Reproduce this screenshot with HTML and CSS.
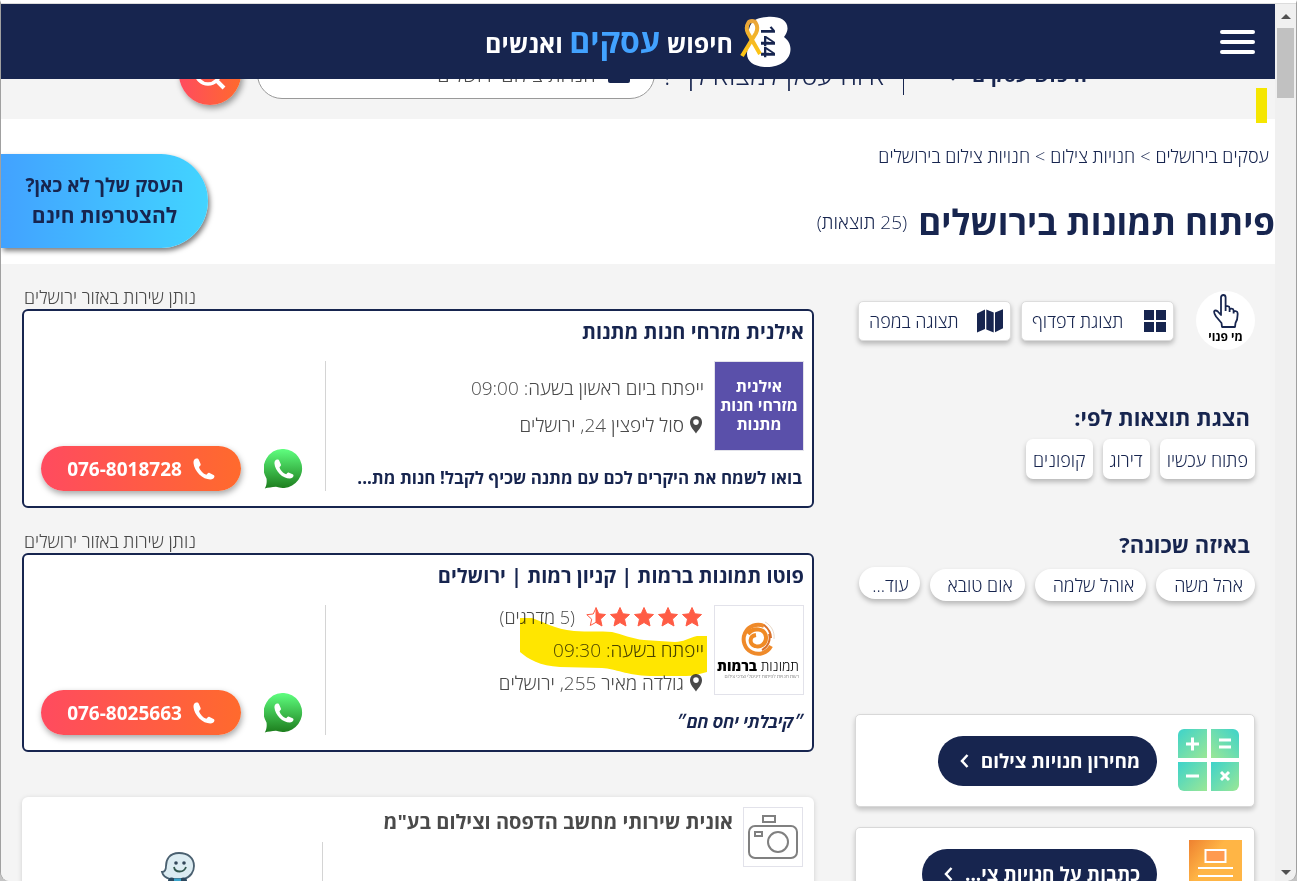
FILE: index.html
```html
<!DOCTYPE html>
<html lang="he">
<head>
<meta charset="UTF-8">
<title>פיתוח תמונות בירושלים</title>
<link rel="stylesheet" href="styles.css">
</head>
<body>
<svg class="defs" width="0" height="0" aria-hidden="true">
	<defs>
		<linearGradient id="waGreen" x1="0" y1="0" x2="0" y2="1">
			<stop offset="0" stop-color="#5fff7f"/><stop offset="1" stop-color="#1d7d1d"/>
		</linearGradient>
		<linearGradient id="calcA" x1="0" y1="0" x2="1" y2="1">
			<stop offset="0" stop-color="#3dd3cb"/><stop offset="1" stop-color="#9be795"/>
		</linearGradient>
		<linearGradient id="calcB" x1="1" y1="0" x2="0" y2="1">
			<stop offset="0" stop-color="#3dd3cb"/><stop offset="1" stop-color="#9be795"/>
		</linearGradient>
		<linearGradient id="orangeBg" x1="0" y1="0" x2="1" y2="1">
			<stop offset="0" stop-color="#ee8130"/><stop offset=".35" stop-color="#ffb545"/>
		</linearGradient>
		<linearGradient id="ribbonGold" x1="0" y1="0" x2="0" y2="1">
			<stop offset="0" stop-color="#e9a53c"/><stop offset="1" stop-color="#ffc711"/>
		</linearGradient>
		<symbol id="phone" viewBox="0 0 22 22">
			<path d="M3.2.6C1.200 1 .4 2.800.5 5c.3 4 2.600 8.300 5.800 11.400 3.200 3.100 7.300 4.900 11 5 2.100 0 3.700-.9 4.100-2.600.2-.9-.2-1.500-.9-1.900l-3.900-1.900c-.8-.4-1.500-.2-2 .4l-1.200 1.400c-1.600-.5-3.300-1.700-4.600-3.100C7.500 12.300 6.400 10.600 6 9l1.200-1.200c.5-.5.6-1.100.4-1.800L5.800 1.800C5.400.8 4.500.3 3.200.6z" fill="#fff"/>
		</symbol>
		<symbol id="whatsapp" viewBox="0 0 40 40">
			<path d="M20 0a19.500 19.500 0 1 1-8 37.800C8 38.200 4 38.600.8 39.500 2.600 36 3 33 2.500 29.500A19.500 19.500 0 0 1 20 0z" fill="url(#waGreen)"/>
			<use href="#phone" x="10" y="10" width="20" height="20"/>
		</symbol>
		<symbol id="pin" viewBox="0 0 14 18">
			<path fill-rule="evenodd" d="M7 0a6 6 0 0 1 6 6.200C13 11 9 14 7 17.500 5 14 1 11 1 6.200A6 6 0 0 1 7 0zm0 3.300a2.800 2.800 0 1 0 0 5.600 2.800 2.800 0 0 0 0-5.600z" fill="#4a4a4a"/>
		</symbol>
		<symbol id="star" viewBox="0 0 20 20">
			<path d="M10 .5l2.800 6.300 6.700.7-5 4.600 1.500 6.900-6-3.500L4 19l1.500-6.900-5-4.600 6.700-.7z" fill="#ff5c45" stroke="#ff5c45" stroke-linejoin="round"/>
		</symbol>
		<symbol id="halfStar" viewBox="0 0 20 20">
			<path d="M10 1L7.200 7 .8 7.700l4.900 4.500L4.300 18.500 10 15.300" fill="none" stroke="#ff5c45"/>
			<path d="M10 .5l2.800 6.300 6.700.7-5 4.600 1.500 6.900-6-3.500z" fill="#ff5c45" stroke="#ff5c45" stroke-linejoin="round"/>
		</symbol>
	</defs>
</svg>

<div class="window">
	<div class="page" dir="rtl">
		<header class="topBar">
			<button type="button" class="menuButton" aria-label="תפריט"><span></span><span></span><span></span></button>
			<a href="#" class="logo">
				<svg width="51" height="52" viewBox="0 0 51 52" aria-hidden="true">
					<path d="M27 1C39 0 48 4 47.500 13c-.2 3-1.500 5-3.500 8 4 3 6.500 7 6.500 12C50.500 44 40 51 27 51 15 51 7 46 7 38c0-4 1-8 4-12-3-5-3-11-1-16C12.500 4 18 1.500 27 1z" fill="#fff"/>
					<text x="0" y="0" transform="translate(21 9) rotate(90)" class="logoDigits">144</text>
					<path d="M2 40L16 17c2-4 1-8-.5-10.500-1-2-6-2-7 0C7 9 6 13 8 17l12 21" fill="none" stroke="url(#ribbonGold)" stroke-width="4"/>
				</svg>
				<span class="logoText">חיפוש <strong>עסקים</strong> ואנשים</span>
			</a>
		</header>

		<form class="searchBar" action="">
			<div class="searchRow">
				<button type="button" class="searchType">חיפוש עסקים
					<svg width="14" height="14" viewBox="0 0 14 14" aria-hidden="true"><path d="M1.500 6.500L7 12l5.500-5.500" fill="none" stroke="#17254f" stroke-width="2.500"/></svg>
				</button>
				<span class="searchDivider"></span>
				<label for="businessName">איזה עסק למצוא לך ?</label>
				<div class="searchField">
					<svg width="22" height="18" viewBox="0 0 22 18" aria-hidden="true"><rect width="22" height="18" rx="2" fill="#17254f"/></svg>
					<input type="text" id="businessName" value="חנויות צילום ירושלים">
				</div>
				<button type="button" class="searchButton" aria-label="חיפוש">
					<svg width="32" height="32" viewBox="0 0 32 32" aria-hidden="true"><circle cx="14" cy="14" r="12" fill="none" stroke="#fff" stroke-width="3.500"/><path d="M22 22l8 8" stroke="#fff" stroke-width="4"/></svg>
				</button>
			</div>
		</form>

		<section class="hero">
			<span class="marker"></span>
			<nav class="breadcrumbs">
				<a href="#">עסקים בירושלים</a><span>&gt;</span><a href="#">חנויות צילום</a><span>&gt;</span><a href="#">חנויות צילום בירושלים</a>
			</nav>
			<div class="headline">
				<h1>פיתוח תמונות בירושלים</h1>
				<span>(25 תוצאות)</span>
			</div>
			<a href="#" class="joinUs"><span>העסק שלך לא כאן?</span><strong>להצטרפות חינם</strong></a>
		</section>

		<main class="content">
			<aside class="sidebar">
				<div class="viewRow">
					<button type="button" class="whoIsFree">
						<svg width="26" height="34" viewBox="0 0 26 34" aria-hidden="true"><path d="M9 33l-.5-4L3 22.500C1.500 20 .6 18.500 1.200 17.300c.8-1.300 2.500-.9 3.600.2L8 21V3.500C8 2 9 1 10.300 1s2.300 1 2.300 2.500V13c0-1.300 3.800-1.300 4 1v2c0-2 3.900-1.600 4 .5v1.500c.2-1.400 3.900-1 4 1 .2 4-.2 7-2.100 10L22 33zM12.600 12v5M16.600 14v4M20.600 16v3.500" fill="none" stroke="#17254f" stroke-width="1.800" stroke-linejoin="round"/></svg>
						<span>מי פנוי</span>
					</button>
					<button type="button" class="viewButton">
						<svg width="22" height="22" viewBox="0 0 22 22" aria-hidden="true"><path d="M0 0h10v10H0zM12 0h10v10H12zM0 12h10v10H0zM12 12h10v10H12z" fill="#17254f"/></svg>
						תצוגת דפדוף
					</button>
					<button type="button" class="viewButton">
						<svg width="26" height="24" viewBox="0 0 26 24" aria-hidden="true"><path d="M0 4.500L8 .5v19.500l-8 3.500zM9.300.5l7.400 3v20l-7.400-3zM18 3.500l8-3.300v19l-8 4z" fill="#17254f"/></svg>
						תצוגה במפה
					</button>
				</div>

				<h2>הצגת תוצאות לפי:</h2>
				<div class="chips">
					<button type="button" class="filter">פתוח עכשיו</button>
					<button type="button" class="filter">דירוג</button>
					<button type="button" class="filter">קופונים</button>
				</div>

				<h2 class="areaTitle">באיזה שכונה?</h2>
				<div class="chips">
					<a href="#" class="area">אהל משה</a>
					<a href="#" class="area">אוהל שלמה</a>
					<a href="#" class="area">אום טובא</a>
					<button type="button" class="area more">עוד...</button>
				</div>

				<div class="promos">
					<div class="promo">
						<svg width="66" height="68" viewBox="0 0 66 68" aria-hidden="true">
							<path d="M8 2h23v29H2V8a6 6 0 0 1 6-6z" fill="url(#calcA)"/>
							<path d="M35 2h22a6 6 0 0 1 6 6v23H35z" fill="url(#calcB)"/>
							<path d="M2 35h29v29H8a6 6 0 0 1-6-6z" fill="url(#calcA)"/>
							<path d="M35 35h28v23a6 6 0 0 1-6 6H35z" fill="url(#calcA)"/>
							<path d="M10 17h13M16.500 10.500v13M43 13h12M43 20h12M10 49h13M45 45l8 8M53 45l-8 8" stroke="#fff" stroke-width="3"/>
						</svg>
						<a href="#" class="promoLink">מחירון חנויות צילום
							<svg width="9" height="16" viewBox="0 0 9 16" aria-hidden="true"><path d="M7.500 2L2 8l5.500 6" fill="none" stroke="#fff" stroke-width="2.500"/></svg>
						</a>
					</div>
					<div class="promo">
						<svg width="66" height="68" viewBox="0 0 66 68" aria-hidden="true">
							<path d="M13 0h53v68H13z" fill="url(#orangeBg)"/>
							<path d="M29.500 10h20v12h-20z" fill="#ff9a50" stroke="#fff" stroke-width="2"/>
							<path d="M22 28h35M22 36h35M22 44h35M22 52h35" stroke="#fff" stroke-width="2"/>
						</svg>
						<a href="#" class="promoLink">כתבות על חנויות צי...
							<svg width="9" height="16" viewBox="0 0 9 16" aria-hidden="true"><path d="M7.500 2L2 8l5.500 6" fill="none" stroke="#fff" stroke-width="2.500"/></svg>
						</a>
					</div>
				</div>
			</aside>

			<section class="results">
				<p class="serviceArea">נותן שירות באזור ירושלים</p>
				<article class="card">
					<h3>אילנית מזרחי חנות מתנות</h3>
					<div class="cardBody">
						<div class="info">
							<div class="infoTop">
								<div class="thumb purple">אילנית<br>מזרחי חנות<br>מתנות</div>
								<div class="details">
									<p>ייפתח ביום ראשון בשעה: 09:00</p>
									<p class="address"><svg width="14" height="18" aria-hidden="true"><use href="#pin"/></svg>סול ליפצין 24, ירושלים</p>
								</div>
							</div>
							<p class="slogan">בואו לשמח את היקרים לכם עם מתנה שכיף לקבל! חנות מת...</p>
						</div>
						<div class="actions">
							<a href="#" class="chat" aria-label="WhatsApp"><svg width="40" height="40"><use href="#whatsapp"/></svg></a>
							<a href="#" class="call"><svg width="22" height="22" aria-hidden="true"><use href="#phone"/></svg>076-8018728</a>
						</div>
					</div>
				</article>

				<p class="serviceArea">נותן שירות באזור ירושלים</p>
				<article class="card">
					<h3>פוטו תמונות ברמות | קניון רמות | ירושלים</h3>
					<div class="cardBody">
						<div class="info">
							<div class="infoTop">
								<div class="thumb">
									<svg width="88" height="88" viewBox="0 0 88 88" aria-hidden="true">
										<path d="M56 40a14.500 14.500 0 1 1-7-20" fill="none" stroke="#ef8a2a" stroke-width="4"/>
										<path d="M33 28c5-7 17-6 18 3 .5 7-6 11-11 9-6-2-6-10 1-11" fill="none" stroke="#f08a24" stroke-width="4"/>
										<path d="M47 44c6-3 9-10 7-16M49 19c5 4 7 8 7 13" fill="none" stroke="#d9702a" stroke-width="2"/>
										<path d="M50 16c6 3 10 10 9 17" fill="none" stroke="#e9d9c8"/>
										<text x="84" y="65" class="brandThin">תמונות <tspan class="brandBold">ברמות</tspan></text>
										<text x="84" y="72" class="brandSmall">רשת חנויות לפיתוח דיגיטלי וצרכי צילום</text>
									</svg>
								</div>
								<div class="details rated">
									<p class="rating">
										<span class="stars"><svg width="20" height="20"><use href="#star"/></svg><svg width="20" height="20"><use href="#star"/></svg><svg width="20" height="20"><use href="#star"/></svg><svg width="20" height="20"><use href="#star"/></svg><svg width="20" height="20"><use href="#halfStar"/></svg></span>
										<span>(5 מדרגים)</span>
									</p>
									<p>ייפתח בשעה: 09:30</p>
									<p class="address"><svg width="14" height="18" aria-hidden="true"><use href="#pin"/></svg>גולדה מאיר 255, ירושלים</p>
									<svg class="highlight" width="187" height="60" viewBox="0 0 187 60" aria-hidden="true">
										<path d="M0 1h12c12 4 22 11 42 13 14 1 26 0 38 1 10 2 20 7 32 8l31 2c8 0 14-4 22-6h10v36c-8 2-14 4-21 4h-36c-24-1-34-7-48-8l-42-1C20 49 8 42 0 35z" fill="#ffe600"/>
									</svg>
								</div>
							</div>
							<p class="slogan quote">״קיבלתי יחס חם״</p>
						</div>
						<div class="actions">
							<a href="#" class="chat" aria-label="WhatsApp"><svg width="40" height="40"><use href="#whatsapp"/></svg></a>
							<a href="#" class="call"><svg width="22" height="22" aria-hidden="true"><use href="#phone"/></svg>076-8025663</a>
						</div>
					</div>
				</article>

				<article class="card plain">
					<div class="plainInfo">
						<div class="thumb small">
							<svg width="58" height="58" viewBox="0 0 58 58" fill="none" stroke="#808080" stroke-width="2" aria-hidden="true"><rect x="5" y="18" width="48" height="32" rx="6"/><rect x="19" y="8" width="12" height="6"/><rect x="11" y="24" width="7" height="4"/><circle cx="34" cy="34" r="10"/></svg>
						</div>
						<h3>אונית שירותי מחשב הדפסה וצילום בע"מ</h3>
					</div>
					<div class="actions">
						<a href="#" aria-label="Waze">
							<svg width="36" height="36" viewBox="0 0 36 36">
								<path d="M19 2C9 2 6 9 6 15c0 4-1 6-4 6 1 4 4 6 8 7h14c7-2 10-8 10-13C34 7 28 2 19 2z" fill="#dcecf2" stroke="#4a6070" stroke-width="1.800"/>
								<circle cx="16" cy="12" r="1.800" fill="#33475a"/><circle cx="24" cy="12" r="1.800" fill="#33475a"/>
								<path d="M14 16c1 6 10 6 12 0" fill="none" stroke="#33574f" stroke-width="1.800"/>
								<circle cx="11.500" cy="30" r="3.500" fill="#2d4a60"/><circle cx="23.500" cy="30" r="3.500" fill="#2d4a60"/><path d="M14 29h7" stroke="#3aa5cc" stroke-width="3"/>
							</svg>
						</a>
					</div>
				</article>
			</section>
		</main>
	</div>

	<div class="scrollbar" aria-hidden="true">
		<span class="arrowUp"></span>
		<span class="thumbBar"></span>
		<span class="arrowDown"></span>
	</div>
</div>
</body>
</html>
```
FILE: styles.css
```css
*{
	box-sizing: border-box;
}
body{
	margin: 0;
	height: 100vh;
	overflow: hidden;
	background: #c4c4c4;
	color: #17254f;
	font-family: 'Open Sans', 'Noto Sans', sans-serif;
	font-size: 18px;
	font-weight: 300;
}
h1, h2, h3, p{
	margin: 0;
}
a{
	color: inherit;
	text-decoration: none;
}
button{
	font: inherit;
	color: inherit;
	border: none;
	padding: 0;
	cursor: pointer;
}
svg{
	display: block;
	flex: none;
}
.defs{
	position: absolute;
}

/* window frame */
.window{
	display: flex;
	height: 100vh;
	overflow: hidden;
	border: 1px solid #a0a0a0;
	border-top: 3px solid white;
	border-bottom: none;
	border-radius: 0 0 9px 9px;
	background: #f0f0f0;
}
.page{
	flex: 1;
	min-width: 0;
	overflow: hidden;
	position: relative;
	border-top: 1px solid #dcdcdc;
	background: #f4f4f4;
}
.scrollbar{
	width: 21px;
	display: flex;
	flex-direction: column;
	align-items: center;
	padding: 10px 0 6px;
	border-top: 1px solid #dcdcdc;
}
.arrowUp, .arrowDown{
	border: 5px solid transparent;
}
.arrowUp{
	border-top: none;
	border-bottom-color: #505050;
}
.arrowDown{
	margin-top: auto;
	border-bottom: none;
	border-top-color: #505050;
}
.thumbBar{
	width: 17px;
	height: 70px;
	margin-top: 9px;
	background: #c1c1c1;
}

/* header */
.topBar{
	display: grid;
	grid-template-columns: 1fr auto 1fr;
	align-items: center;
	height: 75px;
	padding: 0 20px;
	background: #17254f;
}
.menuButton{
	display: flex;
	flex-direction: column;
	gap: 6px;
	width: 35px;
	background: none;
}
.menuButton span{
	height: 4px;
	width: 100%;
	border-radius: 2px;
	background: white;
}
.logo{
	display: flex;
	align-items: center;
	gap: 7px;
	color: white;
}
.logoText{
	font-size: 25px;
	font-weight: 700;
	line-height: 46px;
}
.logoText strong{
	font-size: 32px;
	font-weight: 700;
	color: #42a2ff;
}
.logoDigits{
	font-size: 19px;
	font-weight: 700;
	fill: #17254f;
	direction: ltr;
}

/* search, mostly under the header */
.searchBar{
	display: flex;
	align-items: flex-end;
	height: 40px;
	padding: 0 188px 14px 178px;
	overflow: hidden;
}
.searchRow{
	flex: 1;
	display: flex;
	align-items: center;
}
.searchType{
	display: flex;
	align-items: center;
	gap: 12px;
	background: none;
	font-size: 20px;
	font-weight: 700;
}
.searchDivider{
	width: 1px;
	height: 42px;
	margin: 0 42px 0 18px;
	background: #17254f;
}
.searchRow label{
	font-size: 27px;
	white-space: nowrap;
}
.searchField{
	flex: 1;
	display: flex;
	align-items: center;
	gap: 12px;
	height: 50px;
	margin: 0 8px 0 16px;
	padding: 0 24px;
	border: 1px solid #999;
	border-radius: 25px;
	background: white;
}
.searchField input{
	flex: 1;
	min-width: 0;
	padding: 0;
	border: none;
	outline: none;
	background: none;
	color: #4a4a4a;
	font: inherit;
	font-size: 20px;
}
.searchButton{
	display: flex;
	align-items: center;
	justify-content: center;
	width: 62px;
	height: 62px;
	border-radius: 50%;
	background: linear-gradient(to right, #ff4b5f, #ff6a2d);
	box-shadow: 2px 3px 6px rgba(0,0,0,0.4);
}

.hero{
	position: relative;
	height: 145px;
	padding-top: 24px;
	background: white;
}
.marker{
	position: absolute;
	top: -31px;
	right: 8px;
	width: 11px;
	height: 35px;
	background: #f5e600;
}
.breadcrumbs{
	display: flex;
	gap: 5px;
	padding-right: 6px;
	line-height: 26px;
}
.headline{
	display: flex;
	align-items: center;
	gap: 11px;
	margin-top: 27px;
	font-size: 19px;
	line-height: 52px;
}
h1{
	font-size: 35px;
}
.joinUs{
	position: absolute;
	top: 35px;
	left: 0;
	display: flex;
	flex-direction: column;
	align-items: center;
	justify-content: center;
	width: 207px;
	height: 94px;
	padding-bottom: 2px;
	border-radius: 0 47px 47px 0;
	background: linear-gradient(to right, #42a2ff, #42d4ff);
	box-shadow: 2px 3px 5px rgba(0,0,0,0.5);
	font-size: 19px;
	font-weight: 700;
	line-height: 30px;
}
.joinUs strong{
	font-size: 21px;
	font-weight: 700;
}

.content{
	display: flex;
	gap: 41px;
	padding: 21px 20px 0 21px;
}
.sidebar{
	width: 400px;
	flex: none;
}
.viewRow{
	display: flex;
	align-items: center;
	margin-top: 6px;
}
.whoIsFree{
	flex: none;
	display: flex;
	flex-direction: column;
	align-items: center;
	width: 59px;
	height: 59px;
	padding-top: 3px;
	margin-left: 12px;
	border-radius: 50%;
	background: white;
	color: black;
	font-size: 12px;
	font-weight: 700;
	line-height: 18px;
}
.viewButton{
	flex: none;
	display: flex;
	align-items: center;
	justify-content: space-between;
	width: 153px;
	height: 40px;
	margin-right: 10px;
	padding: 0 7px 0 10px;
	border: 1px solid #ddd;
	border-radius: 5px;
	background: white;
	box-shadow: 0 3px 5px rgba(0,0,0,0.25);
}
h2{
	margin-top: 50px;
	padding-right: 5px;
	font-size: 22px;
	line-height: 34px;
}
.areaTitle{
	margin-top: 48px;
}
.chips{
	display: flex;
	gap: 10px;
	margin-top: 5px;
}
.filter, .area{
	background: white;
	box-shadow: 0 3px 5px rgba(0,0,0,0.25);
	white-space: nowrap;
}
.filter{
	height: 40px;
	padding: 2px 7px 0;
	border-radius: 7px;
}
.area{
	height: 32px;
	padding: 0 12px 0 18px;
	border-radius: 16px;
	line-height: 32px;
	margin-top: 3px;
}
.more{
	padding: 2px 11px 0 13px;
	margin-top: 1px;
}
.promos{
	display: flex;
	flex-direction: column;
	gap: 20px;
	margin-top: 113px;
}
.promo{
	display: flex;
	align-items: center;
	gap: 19px;
	height: 93px;
	padding: 0 12px;
	border: 1px solid #d8d8d8;
	border-radius: 5px;
	background: white;
	box-shadow: 0 3px 5px rgba(0,0,0,0.2);
}
.promoLink{
	display: flex;
	align-items: center;
	gap: 12px;
	height: 50px;
	padding: 0 17px 0 22px;
	border-radius: 25px;
	background: #17254f;
	color: white;
	font-size: 19px;
	font-weight: 700;
}

/* results */
.results{
	flex: 1;
	min-width: 0;
}
.serviceArea{
	margin-left: 2px;
	color: #4a4a4a;
	line-height: 24px;
	text-align: left;
}
.card{
	height: 199px;
	margin-bottom: 21px;
	padding: 6px 8px 0 17px;
	border: 2px solid #17254f;
	border-radius: 6px;
	background: white;
}
h3{
	font-size: 20px;
	line-height: 30px;
}
.cardBody{
	display: flex;
	margin-top: 14px;
	height: 130px;
}
.info{
	flex: 1;
	min-width: 0;
	display: flex;
	flex-direction: column;
	justify-content: space-between;
}
.infoTop{
	display: flex;
	gap: 10px;
	height: 90px;
}
.thumb{
	flex: none;
	width: 90px;
	height: 90px;
	border: 1px solid #e2e2ea;
}
.purple{
	padding-top: 15px;
	background: #5a50aa;
	color: white;
	font-size: 16px;
	font-weight: 700;
	line-height: 19px;
	text-align: center;
	white-space: nowrap;
}
.small{
	width: 60px;
	height: 60px;
}
.brandThin{
	font-size: 14px;
}
.brandBold{
	font-weight: 800;
}
.brandSmall{
	font-size: 5px;
	fill: #666;
}
.details{
	flex: 1;
	position: relative;
	display: flex;
	flex-direction: column;
	justify-content: center;
	gap: 11px;
	color: #4a4a4a;
	font-size: 19px;
	line-height: 26px;
}
.rated{
	gap: 7px;
}
.address, .rating, .stars{
	display: flex;
	align-items: center;
}
.address{
	gap: 5px;
	padding-right: 1px;
}
.rating{
	gap: 11px;
	padding-right: 2px;
	font-size: 18px;
}
.stars{
	gap: 4px;
}
.highlight{
	position: absolute;
	top: 12px;
	right: -3px;
	mix-blend-mode: multiply;
}
.slogan{
	padding-right: 2px;
	font-size: 17px;
	font-weight: 700;
	line-height: 26px;
	white-space: nowrap;
}
.quote{
	padding-right: 0;
	font-style: italic;
}
.actions{
	display: flex;
	align-items: flex-end;
	gap: 23px;
	padding-right: 21px;
	border-right: 1px solid #d4d4d4;
}
.chat{
	margin-bottom: 2px;
}
.call{
	display: flex;
	align-items: center;
	justify-content: center;
	gap: 11px;
	width: 200px;
	height: 45px;
	border-radius: 23px;
	background: linear-gradient(to right, #ff4b5f, #ff6a2d);
	box-shadow: 1px 3px 6px rgba(0,0,0,0.35);
	color: white;
	font-size: 19px;
	font-weight: 700;
}
.plain{
	display: flex;
	justify-content: space-between;
	margin-top: 45px;
	padding: 10px 11px 0 0;
	border: none;
	color: #4a4a4a;
	box-shadow: 0 1px 5px rgba(0,0,0,0.15);
}
.plainInfo{
	display: flex;
	gap: 10px;
}
.plain .actions{
	width: 301px;
	height: 130px;
	margin-top: 35px;
	padding-right: 126px;
	padding-top: 9px;
	align-items: flex-start;
}
```
